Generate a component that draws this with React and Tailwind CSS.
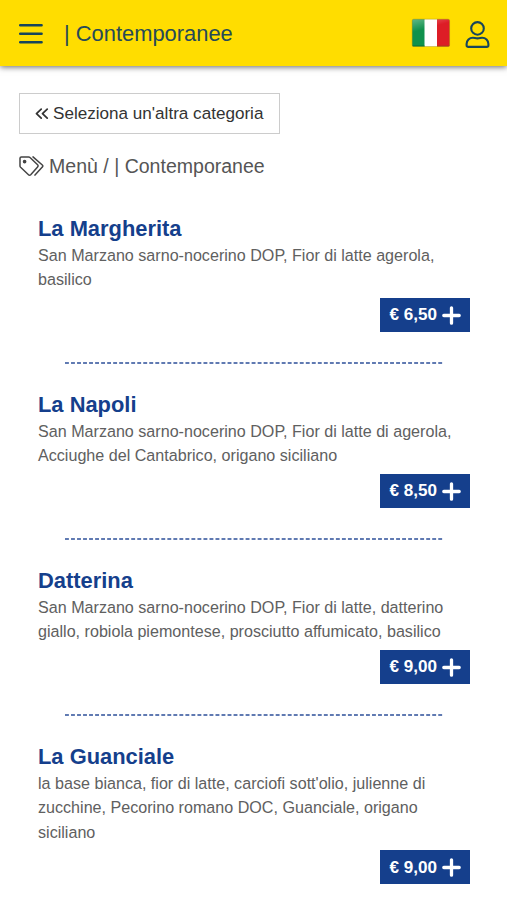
const items = [
  {
    name: "La Margherita",
    lines: ["San Marzano sarno-nocerino DOP, Fior di latte agerola,", "basilico"],
    price: "6,50",
  },
  {
    name: "La Napoli",
    lines: ["San Marzano sarno-nocerino DOP, Fior di latte di agerola,", "Acciughe del Cantabrico, origano siciliano"],
    price: "8,50",
  },
  {
    name: "Datterina",
    lines: ["San Marzano sarno-nocerino DOP, Fior di latte, datterino", "giallo, robiola piemontese, prosciutto affumicato, basilico"],
    price: "9,00",
  },
  {
    name: "La Guanciale",
    lines: ["la base bianca, fior di latte, carciofi sott'olio, julienne di", "zucchine, Pecorino romano DOC, Guanciale, origano", "siciliano"],
    price: "9,00",
  },
];

function Flag() {
  return (
    <svg width="40" height="30" viewBox="0 0 40 30" className="block">
      <defs>
        <linearGradient id="shine" x1="0" y1="0" x2="0.6" y2="1">
          <stop offset="0" stopColor="#fff" stopOpacity="0.38" />
          <stop offset="0.6" stopColor="#fff" stopOpacity="0" />
        </linearGradient>
        <clipPath id="flag">
          <rect x="1.2" y="1.2" width="37.4" height="27.3" rx="1.5" />
        </clipPath>
      </defs>
      <g clipPath="url(#flag)">
        <rect width="14" height="30" fill="#0f914c" />
        <rect x="13.5" width="12.6" height="30" fill="#fff" />
        <rect x="26" width="14" height="30" fill="#dd1d26" />
        <rect width="40" height="18" fill="url(#shine)" />
        <path d="M0 28h13.5" stroke="#087036" strokeWidth="1.2" />
        <path d="M26 28h14" stroke="#ad3a18" strokeWidth="1.2" />
      </g>
      <rect x="1.2" y="1.2" width="37.4" height="27.3" rx="1.5" fill="none" stroke="#8c7a20" strokeOpacity="0.4" strokeWidth="0.9" />
    </svg>
  );
}

function Header() {
  return (
    <header className="flex h-[66px] items-center bg-[#ffdd00] pl-[19px] pr-[17px] text-[#264a58] shadow-[0_1px_6px_rgba(0,0,0,0.6)]">
      <svg width="24" height="22" viewBox="0 0 24 22" className="mt-0.5" fill="none" stroke="#17455c" strokeWidth="2.5" strokeLinecap="round">
        <path d="M1.2 2.3h21.4M1.2 10.8h21.4M1.2 19.3h21.4" />
      </svg>
      <h1 className="ml-[21px] mt-0.5 whitespace-nowrap text-[21.9px] leading-none">| Contemporanee</h1>
      <div className="ml-auto mr-[14px]">
        <Flag />
      </div>
      <svg width="25" height="29" viewBox="0 0 25 29" className="mt-0.5" fill="none" stroke="#17455c" strokeWidth="2.1" strokeLinejoin="round">
        <circle cx="12.500" cy="8.400" r="6.300" />
        <path d="M7.900 17.700c1.500 0 2.600.700 4.600.700s3.100-.700 4.600-.700c3.500 0 6.300 2.700 6.300 6.200v1.300c0 1.100-.7 1.700-1.700 1.700H3.300c-1 0-1.700-.6-1.700-1.700v-1.300c0-3.500 2.800-6.200 6.300-6.200z" />
      </svg>
    </header>
  );
}

function MenuItem({ item }) {
  return (
    <article className="flex h-[176px] flex-col pl-[19px] pr-[18px]">
      <h2 className="mt-[11px] text-[21.9px] font-bold leading-[28px] text-[#153f8c]">{item.name}</h2>
      <p className="whitespace-nowrap text-[16.11px] leading-[24.4px] text-[#606060]">
        {item.lines.map((line) => (
          <span key={line} className="block">{line}</span>
        ))}
      </p>
      <button className="mt-[6px] flex h-[34px] w-[90px] shrink-0 items-center justify-between self-end bg-[#153f8c] pl-[9.500px] pr-[9px] pt-px text-[17.1px] font-bold text-white">
        <span className="whitespace-nowrap">€ {item.price}</span>
        <svg width="19" height="19" viewBox="0 0 19 19" stroke="currentColor" strokeWidth="3.300" strokeLinecap="round">
          <path d="M9.500 1.800v15.400M1.800 9.500h15.400" />
        </svg>
      </button>
    </article>
  );
}

function Divider() {
  return (
    <svg width="378" height="2" viewBox="0 0 378 2" className="-mt-[18px] mb-[16px] ml-[46px] block">
      <path d="M0 1H378" stroke="#2c4f99" strokeWidth="1.300" strokeDasharray="3.9 2.12" />
    </svg>
  );
}

export default function App() {
  return (
    <div className="h-[900px] w-[507px] overflow-hidden bg-white font-['Liberation_Sans',Arial,sans-serif]">
      <Header />
      <main className="px-[19px] pt-[27px]">
        <button className="flex h-[41px] w-[261px] items-center border border-[#cccccc] pl-[15px] text-[17.1px] text-[#333333]">
          <svg width="14" height="12" viewBox="0 0 14 12" fill="none" stroke="currentColor" strokeWidth="1.700" strokeLinecap="round" strokeLinejoin="round">
            <path d="M6.200 1.200L1.500 5.700l4.700 4.500M12.200 1.200L7.500 5.700l4.700 4.500" />
          </svg>
          <span className="ml-1 whitespace-nowrap">Seleziona un'altra categoria</span>
        </button>
        <div className="mt-[20px] flex h-[24px] items-center text-[#555555]">
          <svg width="25" height="21" viewBox="0 0 25 21" fill="none" stroke="#444" strokeWidth="1.500" strokeLinecap="round" strokeLinejoin="round">
            <path d="M1 2.300A1.400 1.400 0 0 1 2.400.900h7.200c.6 0 1 .2 1.400.6l7.600 7.200a1.500 1.500 0 0 1 0 2.200l-6.900 7.800a1.500 1.500 0 0 1-2.200 0L1.600 11.300A2 2 0 0 1 1 9.900z" />
            <path d="M14 .9l9.300 8.100a1.500 1.500 0 0 1 0 2.100l-7.300 8" />
            <circle cx="5.600" cy="5.600" r="1.100" fill="#444" />
          </svg>
          <span className="ml-[5px] mt-[2px] whitespace-nowrap text-[19.550px] leading-none">Menù / | Contemporanee</span>
        </div>
        <section className="pt-[26px]">
          {items.map((item, i) => (
            <div key={item.name}>
              <MenuItem item={item} />
              {i < items.length - 1 && <Divider />}
            </div>
          ))}
        </section>
      </main>
    </div>
  );
}
